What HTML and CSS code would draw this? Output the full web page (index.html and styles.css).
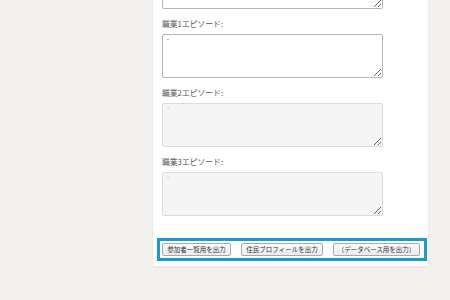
FILE: index.html
```html
<!DOCTYPE html>
<html lang="ja">
<head>
<meta charset="utf-8">
<link rel="stylesheet" href="styles.css">
</head>
<body>
<div class="card">
  <textarea class="ta"></textarea>
  <div class="field">
    <label class="lbl">職業1エピソード:</label>
    <textarea class="ta">·</textarea>
  </div>
  <div class="field">
    <label class="lbl">職業2エピソード:</label>
    <textarea class="ta" disabled>·</textarea>
  </div>
  <div class="field">
    <label class="lbl">職業3エピソード:</label>
    <textarea class="ta" disabled>·</textarea>
  </div>
  <div class="actions">
    <button class="btn b1">参加者一覧用を出力</button>
    <button class="btn b2">住民プロフィールを出力</button>
    <button class="btn b3">（データベース用を出力）</button>
  </div>
</div>
</body>
</html>
```
FILE: styles.css
```css
html, body {
  margin: 0;
  padding: 0;
}
body {
  background: #f2f1ef;
  width: 450px;
  height: 300px;
  overflow: hidden;
  font-family: "Noto Sans CJK JP", "Noto Sans", sans-serif;
}
.card {
  margin-top: -45px;
  margin-left: 153px;
  width: 275px;
  box-sizing: border-box;
  background: #fff;
  padding: 10px 1px 5px 9px;
  box-shadow: 0 1px 3px rgba(0,0,0,0.06);
}
.ta {
  display: block;
  box-sizing: border-box;
  width: 221px;
  height: 44px;
  margin: 0;
  padding: 0 3px;
  border: 1px solid #b5b5b5;
  border-radius: 2px;
  background: #fff;
  font-family: "Noto Sans CJK JP", sans-serif;
  font-size: 7px;
  line-height: 9px;
  color: #333;
  resize: vertical;
}
.ta:disabled {
  background: #f5f5f5;
  border-color: #dcdcdc;
  color: #888;
}
.field {
  margin-top: 10px;
}
.lbl {
  display: block;
  font-size: 7.8px;
  line-height: 10px;
  height: 10px;
  margin-bottom: 5px;
  color: #555;
  white-space: nowrap;
}
.actions {
  margin-top: 22px;
  margin-left: -5px;
  border: 3px solid #1a9bd6;
  padding: 2px 4px 2px 2px;
  display: flex;
  gap: 10px;
}
.btn {
  box-sizing: border-box;
  height: 13px;
  padding: 0;
  border: 1px solid #a9a9a9;
  border-radius: 2px;
  background: linear-gradient(#fafafa, #ececec);
  font-family: "Noto Sans CJK JP", sans-serif;
  font-size: 6.5px;
  line-height: 11px;
  color: #333;
  white-space: nowrap;
}
.b1 { width: 69px; }
.b2 { width: 82px; }
.b3 { width: 87px; }
```
